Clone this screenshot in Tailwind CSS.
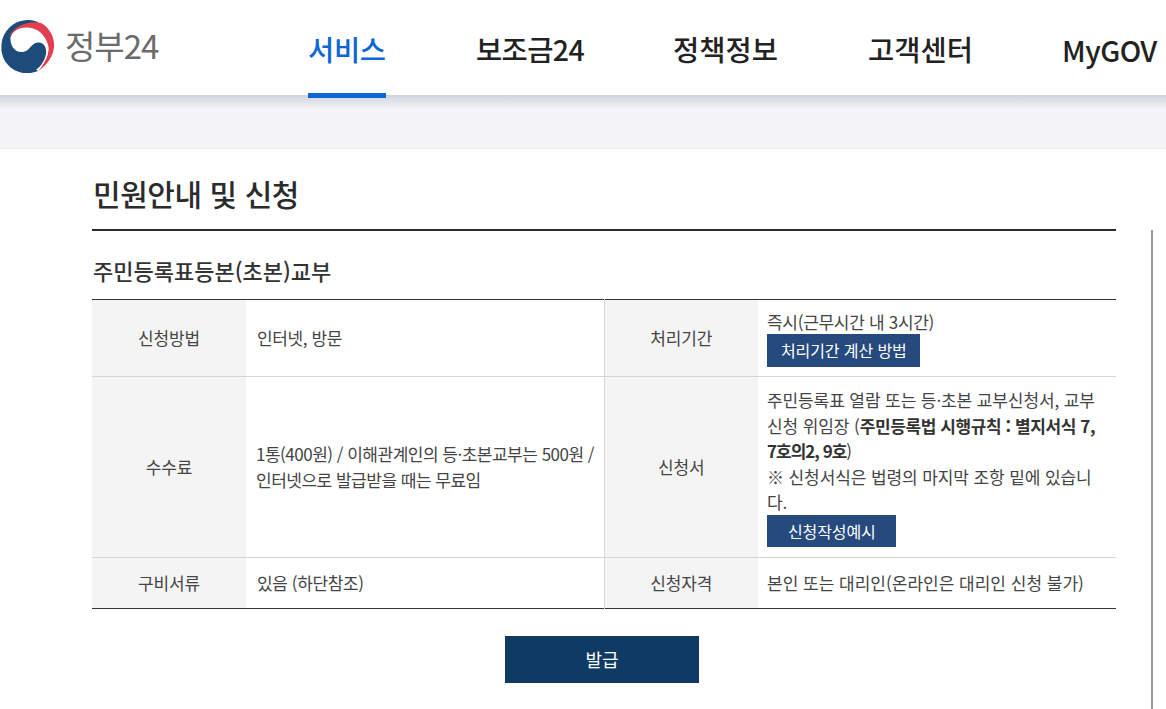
<!DOCTYPE html>
<html lang="ko">
<head>
<meta charset="utf-8">
<script src="https://cdn.jsdelivr.net/npm/@tailwindcss/browser@4"></script>
</head>
<body class="bg-white overflow-hidden font-['Noto_Sans_CJK_KR','Noto_Sans',sans-serif] text-[#333]">
<div class="w-[1166px] h-[709px] overflow-hidden relative">
  <header class="h-[95px] flex bg-white relative z-10">
    <div class="w-[300px] flex items-start pt-[20px] gap-[10px]">
      <svg width="55" height="53" viewBox="0 0 55 53" class="shrink-0">
        <path d="M38 2A26.500 26.500 0 1 0 38 51L48 30Z" fill="#1d4c7a"/>
        <path d="M9 16C15 5 30 0 41 3C50 8 55 18 54 27C53 37 47 45 38 51C45 43 50 33 48 25C45 13 25 3 9 16Z" fill="#e0404f"/>
        <path d="M10 19C12 10 20 7 28 7.500C37 8 45 14 48 25C50 33 45 43 38 51L30 45L10 30Z" fill="#fff"/>
        <path d="M10.500 18C10 26 15 33 23 32C30 31 31 23 38 22.500C44 22 47 28 46 34C44.500 42 38 52 27 53C15 53 3 45 1.500 30Z" fill="#1d4c7a"/>
      </svg>
      <span class="text-[33px] leading-[40px] text-[#6b6b6b] tracking-[-1px] mt-[5px]">정부24</span>
    </div>
    <nav class="flex-1 relative text-[28.5px] font-medium text-[#222]">
      <a class="absolute left-[8px] top-0 w-[78px] h-[98px] border-b-[5px] border-[#0b66d8] text-[#0b66d8] pt-[29px] leading-[40px] whitespace-nowrap tracking-[-0.3px]">서비스</a>
      <a class="absolute left-[176px] top-[29px] leading-[40px] whitespace-nowrap tracking-[-0.6px]">보조금24</a>
      <a class="absolute left-[373px] top-[29px] leading-[40px] whitespace-nowrap">정책정보</a>
      <a class="absolute left-[568px] top-[29px] leading-[40px] whitespace-nowrap">고객센터</a>
      <a class="absolute left-[762px] top-[30px] leading-[40px] whitespace-nowrap tracking-[-0.5px]">MyGOV</a>
    </nav>
  </header>
  <div class="h-[54px] border-b border-[#ececec] bg-[linear-gradient(#cdd3e0,#f4f4f6_14px)]"></div>
  <main class="pl-[92px] pr-[50px] relative">
    <h1 class="h-[82px] pt-[22px] pl-[1px] text-[30px] leading-[44px] font-medium tracking-[-0.45px] text-[#2b2b2b] border-b-2 border-[#2b2b2b]">민원안내 및 신청</h1>
    <h2 class="pt-[20px] pl-[1px] h-[68px] text-[22px] leading-[38px] font-medium text-[#333]">주민등록표등본(초본)교부</h2>
    <table class="w-[1024px] table-fixed border-collapse border-y border-[#333] text-[17px] leading-[26px] tracking-[-0.1px] text-[#444]">
      <colgroup><col class="w-[154px]"><col class="w-[358px]"><col class="w-[154px]"><col class="w-[358px]"></colgroup>
      <tbody>
        <tr class="h-[77px] border-b border-[#d6d6d6]">
          <th class="bg-[#f4f4f4] font-normal">신청방법</th>
          <td class="px-[11px] tracking-[-0.4px]">인터넷, 방문</td>
          <th class="bg-[#f4f4f4] font-normal border-l border-[#d6d6d6]">처리기간</th>
          <td class="px-[9px] align-top pt-[9px]">
            <div class="h-[25px] tracking-[-0.3px]">즉시(근무시간 내 3시간)</div>
            <a class="inline-block bg-[#264a7d] text-white text-[16px] h-[33px] leading-[33px] pl-[14px] pr-[13px] align-top">처리기간 계산 방법</a>
          </td>
        </tr>
        <tr class="h-[181px] border-b border-[#d6d6d6]">
          <th class="bg-[#f4f4f4] font-normal">수수료</th>
          <td class="pl-[10px] pr-[8px] leading-[26px] tracking-[-0.5px]">1통(400원) / 이해관계인의 등·초본교부는 500원 / 인터넷으로 발급받을 때는 무료임</td>
          <th class="bg-[#f4f4f4] font-normal border-l border-[#d6d6d6]">신청서</th>
          <td class="pl-[9px] pr-[11px] align-top pt-[10px] leading-[25.6px]">
            <div>주민등록표 열람 또는 등·초본 교부신청서, 교부 신청 위임장 (<b class="font-bold text-[#333] tracking-[-0.4px]">주민등록법 시행규칙 : 별지서식 7, <span class="tracking-[-1px]">7호의2, 9호</span></b>)</div>
            <div>※ 신청서식은 법령의 마지막 조항 밑에 있습니다.</div>
            <a class="inline-block bg-[#264a7d] text-white text-[16px] h-[32px] leading-[32px] pl-[21px] pr-[20px] align-top">신청작성예시</a>
          </td>
        </tr>
        <tr class="h-[51px]">
          <th class="bg-[#f4f4f4] font-normal">구비서류</th>
          <td class="px-[11px] tracking-[-0.4px]">있음 (하단참조)</td>
          <th class="bg-[#f4f4f4] font-normal border-l border-[#d6d6d6]">신청자격</th>
          <td class="px-[9px] tracking-[0px]">본인 또는 대리인(온라인은 대리인 신청 불가)</td>
        </tr>
      </tbody>
    </table>
    <div class="w-[1024px] flex justify-center mt-[27px]">
      <a class="block w-[194px] h-[47px] -ml-[4px] bg-[#0f3a64] text-white text-center text-[18px] leading-[47px]">발급</a>
    </div>
    <div class="absolute left-[1151px] top-[81px] w-[2px] h-[500px] bg-[#999]"></div>
  </main>
</div>
</body>
</html>
